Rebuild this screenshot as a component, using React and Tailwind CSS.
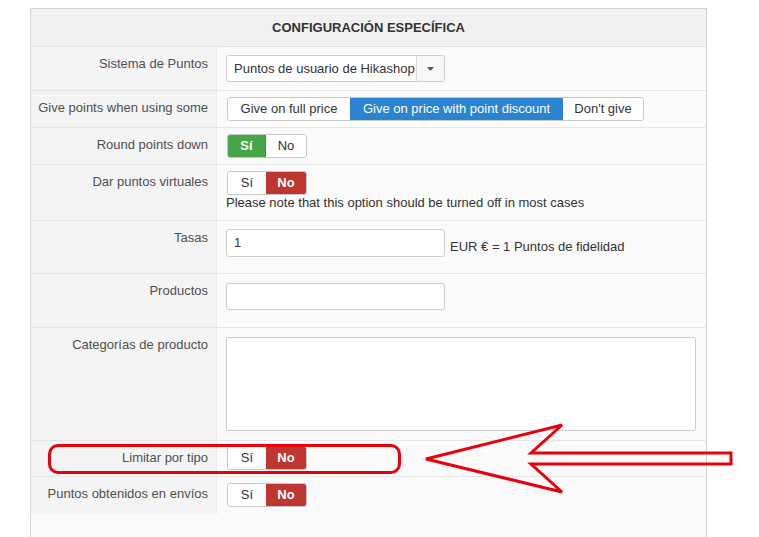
import React from "react";

const font = { fontFamily: '"Liberation Sans", Arial, sans-serif' };

function Label({ children }) {
  return (
    <div className="w-[186px] shrink-0 bg-[#f4f4f4] border-r border-[#ebebeb] text-right pr-[8px] pt-[8px] text-[13px] leading-[18px] text-[#4f4f4f]">
      {children}
    </div>
  );
}

function Row({ label, h, children }) {
  return (
    <div className={"flex border-b border-[#e6e6e6] " + h}>
      <Label>{label}</Label>
      <div className="flex-1 pl-[9px] pr-[10px]">{children}</div>
    </div>
  );
}

function Toggle({ on }) {
  return (
    <div className="flex h-[24px] w-[80px] rounded-[3px] border border-[#c8c8c8] overflow-hidden text-[13px] leading-[22px]">
      <div className={"w-[38px] text-center " + (on ? "bg-[#46a546] text-white font-bold border-r border-[#3a8f3a]" : "bg-white text-[#333]")}>Sí</div>
      <div className={"flex-1 text-center " + (on ? "bg-white text-[#333]" : "bg-[#bd362f] text-white font-bold")}>No</div>
    </div>
  );
}

export default function App() {
  return (
    <div className="relative w-[759px] h-[537px] overflow-hidden bg-white" style={font}>
      <div className="ml-[30px] mt-[8px] w-[677px] h-[540px] border border-[#d6d6d6] bg-[#fafafa]">
        <div className="h-[38px] bg-[#f1f1f1] border-b border-[#e2e2e2] flex items-center justify-center text-[13px] font-bold text-[#333]">
          CONFIGURACIÓN ESPECÍFICA
        </div>

        <Row label="Sistema de Puntos" h="h-[44px]">
          <div className="mt-[8px] flex h-[27px] w-[219px] rounded-[3px] border border-[#cccccc] bg-white text-[13px] text-[#333] overflow-hidden">
            <div className="flex-1 pl-[7px] leading-[25px]">Puntos de usuario de Hikashop</div>
            <div className="w-[28px] border-l border-[#dcdcdc] bg-[#f7f7f7] flex items-center justify-center">
              <svg width="7" height="4" viewBox="0 0 7 4"><path d="M0 0h7L3.5 4z" fill="#555" /></svg>
            </div>
          </div>
        </Row>

        <Row label="Give points when using some" h="h-[37px]">
          <div className="mt-[6px] ml-[1px] flex h-[24px] w-[417px] rounded-[3px] border border-[#c8c8c8] overflow-hidden text-[13px] leading-[22px] text-[#333]">
            <div className="w-[122px] bg-white text-center">Give on full price</div>
            <div className="w-[213px] bg-[#2a84d2] text-white text-center">Give on price with point discount</div>
            <div className="flex-1 bg-white text-center">Don't give</div>
          </div>
        </Row>

        <Row label="Round points down" h="h-[37px]">
          <div className="mt-[6px] ml-[1px]"><Toggle on /></div>
        </Row>

        <Row label="Dar puntos virtuales" h="h-[56px]">
          <div className="mt-[6px] ml-[1px]"><Toggle /></div>
          <div className="text-[13px] leading-[15px] text-[#333]">Please note that this option should be turned off in most cases</div>
        </Row>

        <Row label="Tasas" h="h-[53px]">
          <div className="mt-[8px] flex items-start">
            <div className="h-[28px] w-[219px] rounded-[3px] border border-[#cccccc] bg-white pl-[7px] text-[13px] leading-[26px] text-[#333]">1</div>
            <div className="ml-[5px] mt-[9px] text-[13px] leading-[18px] text-[#333]">EUR € = 1 Puntos de fidelidad</div>
          </div>
        </Row>

        <Row label="Productos" h="h-[54px]">
          <div className="mt-[9px] h-[27px] w-[219px] rounded-[3px] border border-[#cccccc] bg-white"></div>
        </Row>

        <Row label="Categorías de producto" h="h-[113px]">
          <div className="mt-[9px] h-[94px] w-full rounded-[2px] border border-[#cccccc] bg-white"></div>
        </Row>

        <Row label="Limitar por tipo" h="h-[36px]">
          <div className="mt-[5px] ml-[1px]"><Toggle /></div>
        </Row>

        <div className="flex h-[37px]">
          <Label>Puntos obtenidos en envíos</Label>
          <div className="flex-1 pl-[10px] pt-[6px]"><Toggle /></div>
        </div>
      </div>

      <div className="absolute left-[48px] top-[444px] w-[353px] h-[30px] border-[3px] border-[#e8000c] rounded-[10px]"></div>
      <svg className="absolute left-0 top-0" width="759" height="537" viewBox="0 0 759 537">
        <polygon
          points="426,459 562,425 531,453 731,453 731,464 531,464 562,492"
          fill="none"
          stroke="#e8000c"
          strokeWidth="3"
          strokeLinejoin="miter"
        />
      </svg>
    </div>
  );
}
